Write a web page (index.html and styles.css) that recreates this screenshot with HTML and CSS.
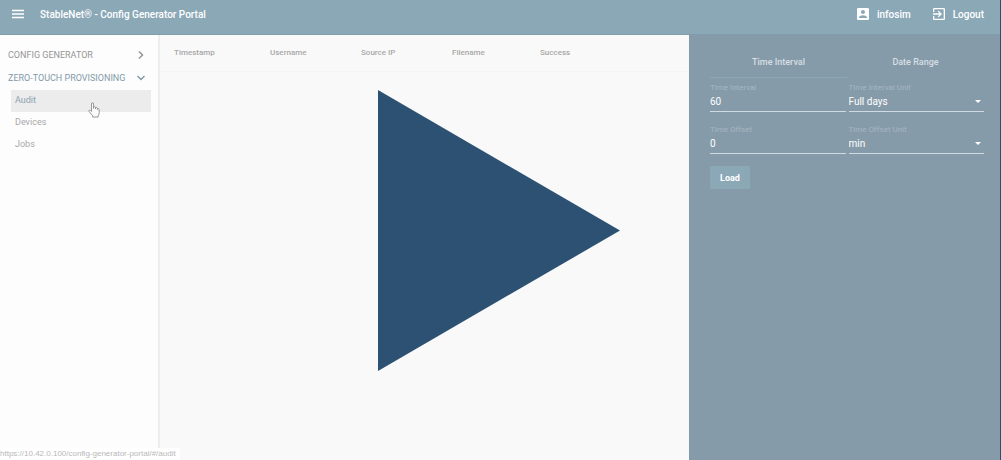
FILE: index.html
```
<!DOCTYPE html>
<html lang="en">
<head>
<meta charset="utf-8">
<title>StableNet® - Config Generator Portal</title>
<link rel="stylesheet" href="styles.css">
</head>
<body>
<div class="app">
  <header class="topbar">
    <button class="menu-button" type="button" aria-label="Menu">
      <svg width="12" height="10" viewBox="0 0 12 10"><path d="M0 1.5h12M0 5h12M0 8.5h12" stroke="currentColor" stroke-width="1.3"/></svg>
    </button>
    <h1 class="title">StableNet® - Config Generator Portal</h1>
    <nav class="account">
      <a class="account-link" href="#user">
        <svg width="16" height="16" viewBox="0 0 24 24" fill="currentColor"><path d="M3 5v14c0 1.100.89 2 2 2h14c1.100 0 2-.9 2-2V5c0-1.100-.9-2-2-2H5c-1.110 0-2 .9-2 2zm12 4c0 1.660-1.340 3-3 3s-3-1.340-3-3 1.340-3 3-3 3 1.340 3 3zm-9 8c0-2 4-3.100 6-3.100s6 1.100 6 3.100v1H6v-1z"/></svg>
        <span>infosim</span>
      </a>
      <a class="account-link" href="#logout">
        <svg width="16" height="16" viewBox="0 0 24 24" fill="currentColor"><path d="M10.090 15.590L11.500 17l5-5-5-5-1.410 1.410L12.670 11H3v2h9.670l-2.580 2.590zM19 3H5c-1.110 0-2 .9-2 2v4h2V5h14v14H5v-4H3v4c0 1.100.89 2 2 2h14c1.100 0 2-.9 2-2V5c0-1.100-.9-2-2-2z"/></svg>
        <span>Logout</span>
      </a>
    </nav>
  </header>
  <div class="body">
    <nav class="sidebar">
      <button class="group" type="button">
        <span>CONFIG GENERATOR</span>
        <svg width="10" height="10" viewBox="0 0 10 10"><path d="M3 1.500L6.500 5 3 8.500" fill="none" stroke="currentColor" stroke-width="1.500"/></svg>
      </button>
      <button class="group group-open" type="button" aria-expanded="true">
        <span>ZERO-TOUCH PROVISIONING</span>
        <svg width="10" height="10" viewBox="0 0 10 10"><path d="M1.500 3L5 6.500 8.500 3" fill="none" stroke="currentColor" stroke-width="1.500"/></svg>
      </button>
      <div class="items">
        <a class="item item-active" href="#audit">Audit</a>
        <a class="item" href="#devices">Devices</a>
        <a class="item" href="#jobs">Jobs</a>
      </div>
    </nav>
    <main class="content">
      <table class="audit">
        <colgroup>
          <col class="col-time"><col class="col-mid"><col class="col-mid"><col class="col-file"><col>
        </colgroup>
        <thead>
          <tr><th>Timestamp</th><th>Username</th><th>Source IP</th><th>Filename</th><th>Success</th></tr>
        </thead>
      </table>
    </main>
    <aside class="panel">
      <div class="tabs" role="tablist">
        <button class="tab tab-active" type="button" role="tab" aria-selected="true">Time Interval</button>
        <button class="tab" type="button" role="tab" aria-selected="false">Date Range</button>
      </div>
      <form class="filters">
        <div class="field">
          <label for="interval">Time Interval</label>
          <input id="interval" type="text" value="60">
        </div>
        <div class="field field-select">
          <label for="interval-unit">Time Interval Unit</label>
          <select id="interval-unit"><option>Full days</option></select>
        </div>
        <div class="field">
          <label for="offset">Time Offset</label>
          <input id="offset" type="text" value="0">
        </div>
        <div class="field field-select">
          <label for="offset-unit">Time Offset Unit</label>
          <select id="offset-unit"><option>min</option></select>
        </div>
        <button class="load" type="button">Load</button>
      </form>
    </aside>
  </div>
  <button class="play" type="button" aria-label="Play">
    <svg width="242" height="281" viewBox="0 0 242 281"><path d="M0 0l242 140.500L0 281z" fill="#2c5172"/></svg>
  </button>
  <svg class="pointer" width="12" height="16" viewBox="0 0 12 16"><path d="M3.500 9.500V2q0-1.300 1-1.300t1 1.300v4.500-1q.2-.8 1-.8t1 .8v1.500-.8q.2-.7 1-.7t.9.800v1.200q.1-.8.900-.8t.9.900v3q0 2-1 3.200v1.200H4.700v-1.200L1 9.500q-.5-1 .3-1.300 1-.2 2.200 1.300z" fill="#fbfbfb" stroke="#8d8d8d" stroke-width=".9" stroke-linejoin="round"/></svg>
  <div class="status">https://10.42.0.100/config-generator-portal/#/audit</div>
</div>
</body>
</html>
```
FILE: styles.css
```
* {
  box-sizing: border-box;
}

body {
  margin: 0;
  font-family: Roboto, "Liberation Sans", sans-serif;
  font-size: 9px;
  color: #a8a8a8;
}

button,
input,
select {
  margin: 0;
  padding: 0;
  border: 0;
  border-radius: 0;
  background: none;
  color: inherit;
  font: inherit;
}

a {
  color: inherit;
  text-decoration: none;
}

svg {
  display: block;
}

.app {
  position: relative;
  display: flex;
  flex-direction: column;
  min-height: 100vh;
  overflow: hidden;
  border-right: 1px solid #245273;
}

.topbar {
  display: flex;
  align-items: center;
  height: 35px;
  padding: 0 16px 6px 12px;
  background: #8ba8b7;
  border-bottom: 1px solid #7f9dac;
  color: #fff;
}

.title {
  flex: 1;
  margin: 0 0 0 16px;
  font-size: 10px;
  font-weight: 500;
}

.account {
  display: flex;
  gap: 20px;
  font-size: 10px;
  font-weight: 500;
}

.account-link {
  display: flex;
  align-items: center;
  gap: 6px;
}

.body {
  display: flex;
  flex: 1;
}

.sidebar {
  width: 160px;
  padding: 8px;
  background: #fdfdfd;
  border-right: 2px solid #ededed;
}

.group {
  display: flex;
  align-items: center;
  justify-content: space-between;
  width: 100%;
  height: 23px;
  padding-right: 4px;
  color: #969696;
}

.group-open {
  color: #829ba9;
}

.items {
  margin: 1px -1px 0 3px;
}

.item {
  display: block;
  height: 22px;
  padding-left: 4px;
  line-height: 21px;
}

.item-active {
  background: #ececec;
  color: #8ba3b1;
}

.content {
  flex: 1;
  background: #f9f9f9;
}

.audit {
  width: 100%;
  border-collapse: collapse;
  table-layout: fixed;
  font-size: 8px;
}

.audit th {
  height: 36px;
  padding: 0 0 0 14px;
  border-bottom: 1px solid #f5f5f5;
  font-weight: 500;
  text-align: left;
}

.col-time {
  width: 96px;
}

.col-mid {
  width: 91px;
}

.col-file {
  width: 88px;
}

.panel {
  width: 311px;
  padding: 12px 16px 16px 21px;
  background: #869baa;
  color: #fff;
}

.tabs {
  display: grid;
  grid-template-columns: 1fr 1fr;
}

.tab {
  height: 31px;
  border-bottom: 1px solid transparent;
  color: #d6dee3;
  font-weight: 500;
}

.tab-active {
  border-color: #8ba8b7;
}

.filters {
  display: grid;
  grid-template-columns: 1fr 1fr;
  gap: 12px 3px;
  padding-top: 4px;
}

.field {
  position: relative;
  height: 30px;
  border-bottom: 1px solid #d1dae0;
}

.field label {
  display: block;
  color: #a5b6c1;
  font-size: 8px;
  line-height: 11px;
}

.field input,
.field select {
  display: block;
  width: 100%;
  height: 16px;
  appearance: none;
  font-size: 10px;
}

.field-select::after {
  position: absolute;
  right: 3px;
  bottom: 8px;
  border: 3px solid transparent;
  border-top-color: #fff;
  border-bottom: 0;
  content: "";
  pointer-events: none;
}

.load {
  justify-self: start;
  width: 40px;
  height: 23px;
  background: #8ba8b7;
  font-weight: 700;
}

.play {
  position: absolute;
  top: 50%;
  left: 50%;
  padding: 1px 2px 0 0;
  transform: translate(-50%, -50%);
}

.pointer {
  position: absolute;
  top: 102px;
  left: 88px;
}

.status {
  position: absolute;
  bottom: 0;
  left: 0;
  height: 12px;
  padding-right: 4px;
  background: #fff;
  color: #b8b8b8;
  font-family: "Liberation Sans", sans-serif;
  font-size: 8px;
  line-height: 12px;
}
```
